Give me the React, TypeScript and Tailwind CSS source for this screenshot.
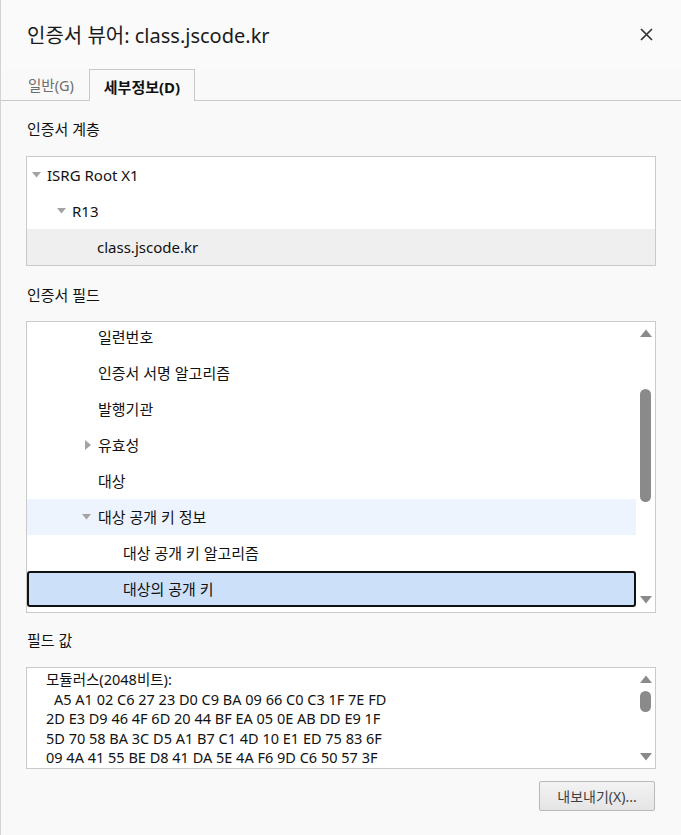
import React from "react";

const FONT = '"Noto Sans", "Noto Sans CJK KR", sans-serif';

function DownTri({ className = "" }: { className?: string }) {
  return (
    <svg width="9" height="6" viewBox="0 0 9 6" className={className}>
      <path d="M0 0 L9 0 L4.5 5.5 Z" fill="#a3a3a3" />
    </svg>
  );
}
function RightTri() {
  return (
    <svg width="6" height="10" viewBox="0 0 6 10">
      <path d="M0 0 L6 5 L0 10 Z" fill="#a3a3a3" />
    </svg>
  );
}
function ArrowUp() {
  return (
    <svg width="12" height="8" viewBox="0 0 12 8">
      <path d="M6 0.5 L12 8 L0 8 Z" fill="#8a8a8a" />
    </svg>
  );
}
function ArrowDown() {
  return (
    <svg width="12" height="8" viewBox="0 0 12 8">
      <path d="M0 0 L12 0 L6 7.5 Z" fill="#8a8a8a" />
    </svg>
  );
}

const fields: { label: string; indent: number; tri?: "right" | "down"; hl?: boolean; sel?: boolean }[] = [
  { label: "일련번호", indent: 0 },
  { label: "인증서 서명 알고리즘", indent: 0 },
  { label: "발행기관", indent: 0 },
  { label: "유효성", indent: 0, tri: "right" },
  { label: "대상", indent: 0 },
  { label: "대상 공개 키 정보", indent: 0, tri: "down", hl: true },
  { label: "대상 공개 키 알고리즘", indent: 1 },
  { label: "대상의 공개 키", indent: 1, sel: true },
];

const hexLines = [
  "A5 A1 02 C6 27 23 D0 C9 BA 09 66 C0 C3 1F 7E FD",
  "2D E3 D9 46 4F 6D 20 44 BF EA 05 0E AB DD E9 1F",
  "5D 70 58 BA 3C D5 A1 B7 C1 4D 10 E1 ED 75 83 6F",
  "09 4A 41 55 BE D8 41 DA 5E 4A F6 9D C6 50 57 3F",
];

export default function App() {
  return (
    <div
      className="w-[681px] h-[835px] bg-[#f9f9f9] border-l border-[#d4d4d4] text-[#111111] overflow-hidden"
      style={{ fontFamily: FONT }}
    >
      {/* Title */}
      <div className="h-[69px] bg-[#fbfafb] flex items-center justify-between pl-[26px] pr-[28px]">
        <div className="text-[20px] leading-none text-[#1a1a1a] pt-[2px]">인증서 뷰어: class.jscode.kr</div>
        <svg width="13" height="13" viewBox="0 0 13 13">
          <path d="M1 1 L12 12 M12 1 L1 12" stroke="#333333" strokeWidth="1.7" />
        </svg>
      </div>

      {/* Tabs */}
      <div className="h-[32px] flex items-end border-b border-[#c9c9c9] pl-[27px]">
        <div className="h-[31px] flex items-center pt-[3px] text-[14.5px] text-[#6e6e6e] w-[61px]">일반(G)</div>
        <div className="h-[32px] -mb-px flex items-center justify-center pt-[3px] w-[106px] border border-b-0 border-[#c9c9c9] bg-[#f9f9f9] text-[15px] font-bold text-[#111111]">
          세부정보(D)
        </div>
      </div>

      <div className="px-[25px]">
        {/* hierarchy */}
        <div className="h-[55px] flex items-center pl-[1px] pt-[1px] text-[15px]">인증서 계층</div>
        <div className="h-[110px] border border-[#cacaca] bg-white">
          <div className="h-[36px] flex items-center pl-[5px] gap-[6px] text-[15px]">
            <DownTri />
            <span>ISRG Root X1</span>
          </div>
          <div className="h-[36px] flex items-center pl-[30px] gap-[6px] text-[15px]">
            <DownTri />
            <span>R13</span>
          </div>
          <div className="h-[36px] flex items-center pl-[70px] bg-[#efefef] text-[15px]">class.jscode.kr</div>
        </div>

        {/* fields */}
        <div className="h-[55px] flex items-center pl-[1px] pt-[3px] text-[15px]">인증서 필드</div>
        <div className="h-[292px] border border-[#cacaca] bg-white flex overflow-hidden">
          <div className="flex-1 overflow-hidden">
            <div className="mt-[-3px]">
              {fields.map((f, i) => (
                <div
                  key={i}
                  className={
                    "h-[36px] flex items-center text-[15px] " +
                    (f.sel
                      ? "bg-[#cce0f9] border-2 border-[#111] rounded-[3px]"
                      : f.hl
                      ? "bg-[#eef4fd]"
                      : "")
                  }
                >
                  <div className={(f.indent ? "w-[96px]" : "w-[71px]") + " flex justify-end pr-[7px] shrink-0"}>
                    {f.tri === "right" ? <RightTri /> : f.tri === "down" ? <DownTri /> : null}
                  </div>
                  <span className={f.sel ? "-ml-[2px]" : ""}>{f.label}</span>
                </div>
              ))}
            </div>
          </div>
          <div className="w-[19px] flex flex-col items-center pt-[7px] pb-[8px]">
            <ArrowUp />
            <div className="mt-[52px] w-[11px] h-[113px] rounded-full bg-[#8a8a8a]" />
            <div className="flex-1" />
            <ArrowDown />
          </div>
        </div>

        {/* value */}
        <div className="h-[54px] flex items-center pl-[1px] pt-[1px] text-[15px]">필드 값</div>
        <div className="h-[102px] border border-[#cacaca] bg-white flex overflow-hidden">
          <div className="flex-1 pl-[19px] pt-[2px] text-[14.5px] leading-[19.5px] whitespace-pre">
            <div>모듈러스(2048비트):</div>
            <div className="pl-[8px]">{hexLines[0]}</div>
            {hexLines.slice(1).map((l, i) => (
              <div key={i}>{l}</div>
            ))}
          </div>
          <div className="w-[19px] flex flex-col items-center pt-[7px] pb-[7px]">
            <ArrowUp />
            <div className="mt-[8px] w-[11px] h-[21px] rounded-full bg-[#8a8a8a]" />
            <div className="flex-1" />
            <ArrowDown />
          </div>
        </div>

        {/* button */}
        <div className="flex justify-end mt-[12px] pr-[1px]">
          <button className="w-[116px] h-[30px] rounded-[2px] border border-[#b9b9b9] bg-gradient-to-b from-[#f3f3f3] to-[#e5e5e5] text-[14px] text-[#404040] flex items-center justify-center">
            내보내기(X)...
          </button>
        </div>
      </div>
    </div>
  );
}
